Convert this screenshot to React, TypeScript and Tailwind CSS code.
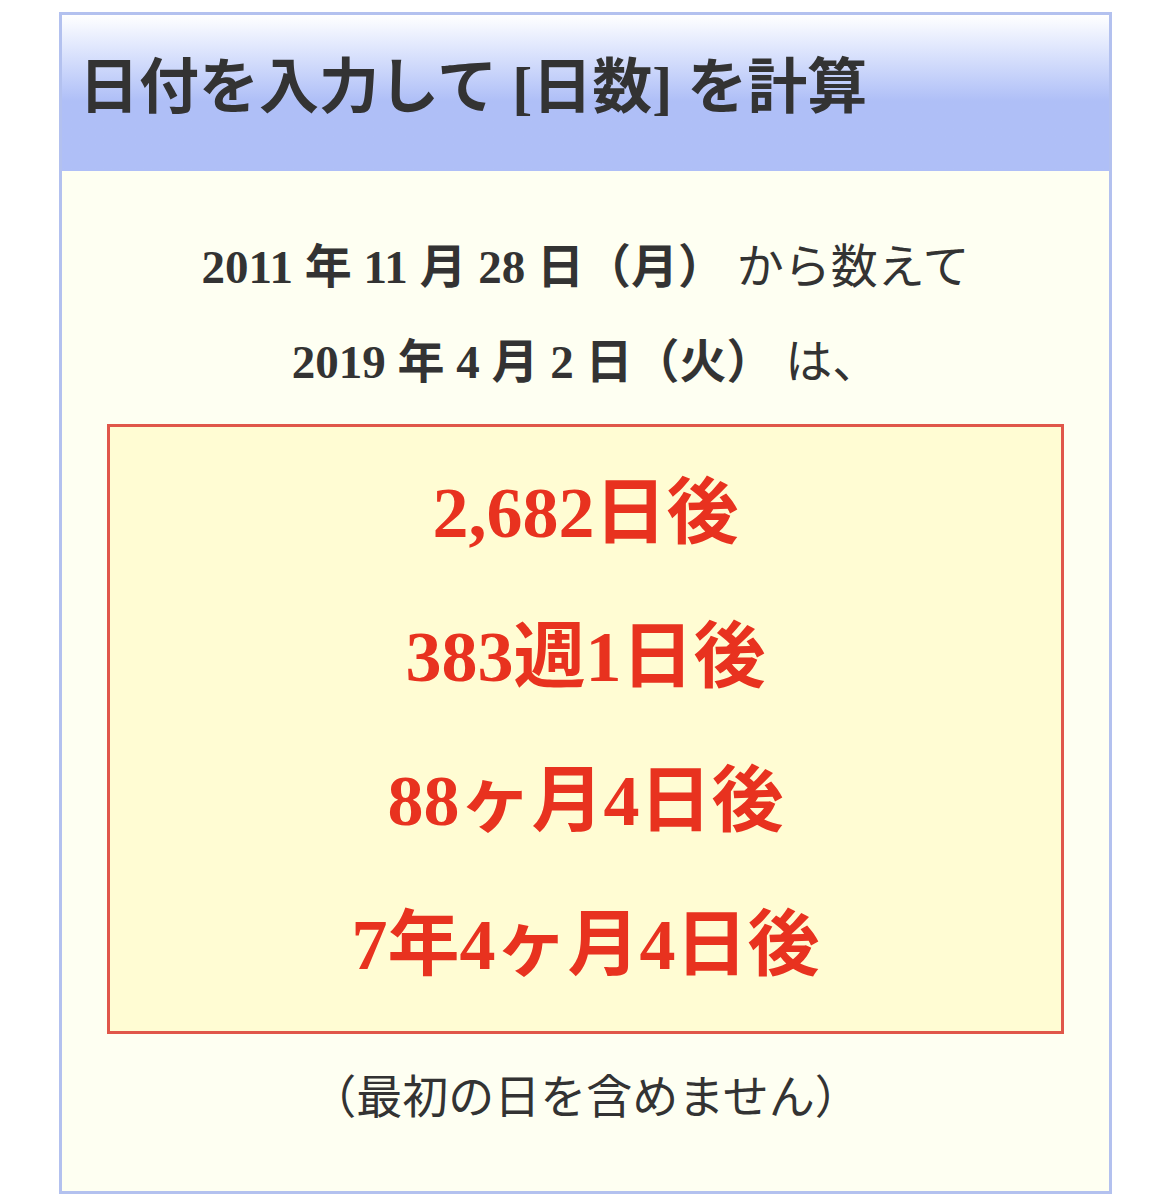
const serif = "font-['Liberation_Serif','Noto_Sans_CJK_JP',serif]"

const results = ["2,682日後", "383週1日後", "88ヶ月4日後", "7年4ヶ月4日後"]

export default function App() {
  return (
    <div className={`min-h-[1195px] bg-white pt-[12px] ${serif}`}>
      <div className="ml-[59px] w-[1053px] border-[3px] border-[#b3c1ef]">
        {/* heading band */}
        <div className="flex h-[156px] items-center bg-gradient-to-b from-[#ffffff] from-0% to-[#afbff7] to-55% pb-[10px] pl-[17px]">
          <h1 className="text-[60px] font-bold leading-none text-[#333]">
            日付を入力して [日数] を計算
          </h1>
        </div>

        <div className="bg-[#fefff2] pt-[49px] pb-[60px]">
          <p className="text-center text-[47px] leading-[95px] text-[#333]">
            <span className="font-bold">2011 年 11 月 28 日（月）</span> から数えて
          </p>
          <p className="text-center text-[47px] leading-[95px] text-[#333]">
            <span className="font-bold">2019 年 4 月 2 日（火）</span> は、
          </p>

          <div className="mx-[45px] mt-[14px] border-[3px] border-[#e0574a] bg-[#fffcd3] py-[14px]">
            {results.map((r) => (
              <p key={r} className="text-center text-[72px] font-bold leading-[144px] text-[#e8321f]">
                {r}
              </p>
            ))}
          </div>

          <p className="mt-[31px] text-center text-[46px] leading-[66px] text-[#333]">
            （最初の日を含めません）
          </p>
        </div>
      </div>
    </div>
  )
}
